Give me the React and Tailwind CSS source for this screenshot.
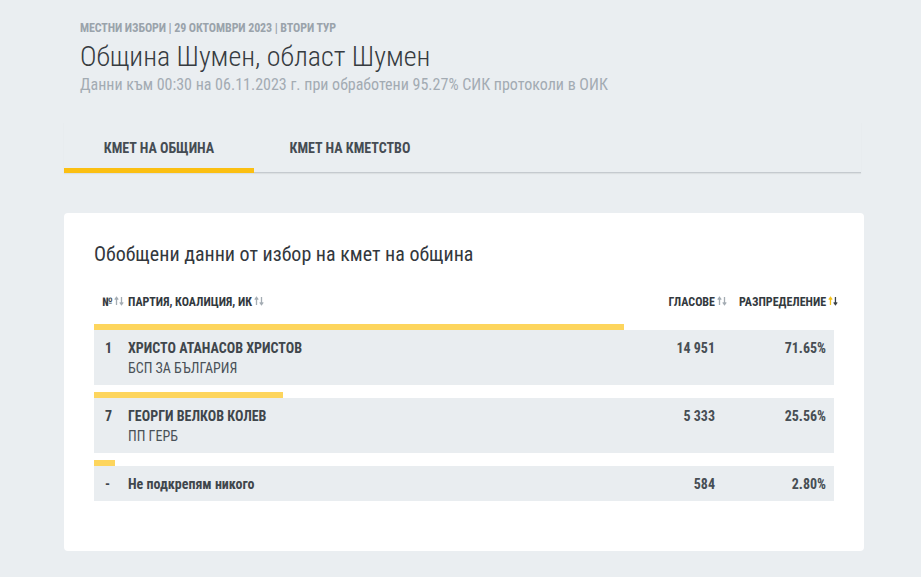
const rows = [
  { no: "1", name: "ХРИСТО АТАНАСОВ ХРИСТОВ", party: "БСП ЗА БЪЛГАРИЯ", votes: "14 951", pct: 71.65 },
  { no: "7", name: "ГЕОРГИ ВЕЛКОВ КОЛЕВ", party: "ПП ГЕРБ", votes: "5 333", pct: 25.56 },
  { no: "-", name: "Не подкрепям никого", party: null, votes: "584", pct: 2.8 },
];

function SortIcon({ active = false }) {
  return (
    <svg width="10" height="10" viewBox="0 0 10 10" className="ml-[2px] -mt-[2px]">
      <path d="M2.5 9V2M0.8 3.6L2.5 1.4 4.2 3.6" stroke={active ? "#f5c21b" : "#a4acb3"} strokeWidth="1.3" fill="none" />
      <path d="M7.5 1V8M5.8 6.4L7.5 8.6 9.2 6.4" stroke={active ? "#3d4348" : "#a4acb3"} strokeWidth="1.3" fill="none" />
    </svg>
  );
}

export default function App() {
  return (
    <div
      className="min-h-[577px] bg-[#eaeef1] pl-16 pt-[20px] pb-6"
      style={{ fontFamily: '"Roboto Condensed", Roboto, "Liberation Sans", sans-serif' }}
    >
      <div className="w-[800px]">
        <div className="pl-[16px]">
          <div className="text-[12px] tracking-[-0.1px] font-bold text-[#9aa3ab] leading-[16px]">
            МЕСТНИ ИЗБОРИ | 29 ОКТОМВРИ 2023 | ВТОРИ ТУР
          </div>
          <h1 className="mt-[3px] text-[28px] font-light text-[#363b40] leading-[36px]">
            Община Шумен, област Шумен
          </h1>
          <div className="text-[16px] text-[#a3abb3] leading-[20px]">
            Данни към 00:30 на 06.11.2023 г. при обработени 95.27% СИК протоколи в ОИК
          </div>
        </div>

        <div className="mt-[27px] mr-[3px] flex border-b border-[#c5cacf] shadow-[0_1px_1px_rgba(0,0,0,0.06)]">
          <div className="w-[190px] -mb-[1px] border-b-[5px] border-[#fbbf12] pt-[17px] pb-[11px] text-center text-[14px] font-bold text-[#454c53] leading-[18px]">
            КМЕТ НА ОБЩИНА
          </div>
          <div className="w-[192px] pt-[17px] pb-[11px] text-center text-[14px] font-bold text-[#454c53] leading-[18px]">
            КМЕТ НА КМЕТСТВО
          </div>
        </div>

        <div className="mt-[40px] bg-white rounded-[4px] px-[30px] pt-[28px] pb-[50px]">
          <h2 className="text-[20px] text-[#33383d] leading-[26px]">
            Обобщени данни от избор на кмет на община
          </h2>

          <div className="mt-[28px] -mr-[4px] flex items-center text-[12px] font-bold text-[#33393e] leading-[14px]">
            <div className="w-[34px] pl-[8px] flex items-center">
              №<SortIcon />
            </div>
            <div className="flex-1 flex items-center">
              ПАРТИЯ, КОАЛИЦИЯ, ИК<SortIcon />
            </div>
            <div className="flex items-center">
              ГЛАСОВЕ<SortIcon />
            </div>
            <div className="w-[111px] pl-[12px] flex items-center whitespace-nowrap">
              РАЗПРЕДЕЛЕНИЕ<SortIcon active />
            </div>
          </div>

          <div className="mt-[15px] flex flex-col gap-[7px]">
            {rows.map((r) => (
              <div key={r.no}>
                <div className="h-[6px] bg-[#fdd55d]" style={{ width: `${r.pct}%` }} />
                <div className="bg-[#e9edf0] flex items-start pt-[9px] pb-[8px] text-[#3f464c]">
                  <div className="w-[34px] pl-[11px] text-[14px] font-bold leading-[18px]">{r.no}</div>
                  <div className="flex-1">
                    <div className="text-[14px] font-bold leading-[18px]">{r.name}</div>
                    {r.party && (
                      <div className="mt-[2px] text-[14px] text-[#4a5157] leading-[18px]">{r.party}</div>
                    )}
                  </div>
                  <div className="text-[14px] font-bold leading-[18px] text-[#474e54]">{r.votes}</div>
                  <div className="w-[119px] pr-[8px] text-right text-[14px] font-bold leading-[18px] text-[#474e54]">
                    {r.pct.toFixed(2)}%
                  </div>
                </div>
              </div>
            ))}
          </div>
        </div>
      </div>
    </div>
  );
}
